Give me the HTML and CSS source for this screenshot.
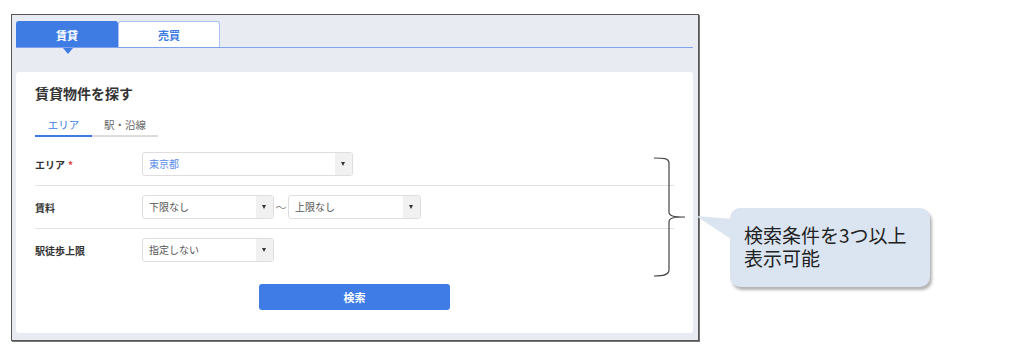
FILE: index.html
```html
<!DOCTYPE html>
<html lang="ja">
<head>
  <meta charset="UTF-8" />
  <title>賃貸物件を探す</title>
  <link rel="stylesheet" href="styles.css">
</head>
<body>
  <div class="shot">
    <div class="tabs">
      <div class="tab active">賃貸</div>
      <div class="tab">売買</div>
    </div>

    <div class="card">
      <h2>賃貸物件を探す</h2>

      <div class="subtabs">
        <div class="subtab active">エリア</div>
        <div class="subtab">駅・沿線</div>
      </div>

      <div class="row">
        <div class="label">エリア<span class="req">*</span></div>
        <div class="select wide">
          <span class="value blue">東京都</span>
          <span class="arrow"></span>
        </div>
      </div>

      <div class="row">
        <div class="label">賃料</div>
        <div class="select">
          <span class="value">下限なし</span>
          <span class="arrow"></span>
        </div>
        <span class="tilde">〜</span>
        <div class="select">
          <span class="value">上限なし</span>
          <span class="arrow"></span>
        </div>
      </div>

      <div class="row last">
        <div class="label">駅徒歩上限</div>
        <div class="select">
          <span class="value">指定しない</span>
          <span class="arrow"></span>
        </div>
      </div>

      <div class="actions">
        <button class="search">検索</button>
      </div>
    </div>
  </div>

  <!-- 注釈 -->
  <svg class="bracket" width="40" height="124" viewBox="0 0 40 124">
    <path d="M1 1 C10 1 16 1 16 6 L16 55 C16 59 20 60 32 60 C20 60 16 61 16 65 L16 113 C16 118 10 119 1 119" fill="none" stroke="#444" stroke-width="1.2" />
  </svg>

  <div class="callout">
    <svg class="tail" width="40" height="30" viewBox="0 0 40 30">
      <path d="M0 1 L38 4 L38 26 Z" fill="#dbe5f1" />
    </svg>
    <p>検索条件を3つ以上</p>
    <p>表示可能</p>
  </div>
</body>
</html>
```

FILE: styles.css
```css
body {
  margin: 0;
  background: #fff;
  font-family: "Noto Sans CJK JP", "Noto Sans", sans-serif;
  color: #333;
  position: relative;
  height: 351px;
}
.shot {
  margin: 14px 0 0 11px;
  width: 688px;
  height: 327px;
  box-sizing: border-box;
  border: 1px solid #555;
  box-shadow: 1px 1px 0 #777;
  background: #e9ebf2;
  padding: 6px 5px 0 4px;
}
.tabs {
  display: flex;
  height: 26px;
  border-bottom: 1px solid #7ea3ec;
}
.tab {
  width: 102px;
  height: 26px;
  box-sizing: border-box;
  display: flex;
  align-items: center;
  justify-content: center;
  font-size: 11px;
  font-weight: bold;
  color: #3e7be3;
  background: #fff;
  border: 1px solid #a9c3f1;
  border-bottom: none;
  border-radius: 3px 3px 0 0;
}
.tab.active {
  background: #3e7ce4;
  color: #fff;
  border-color: #3e7ce4;
  position: relative;
}
.tab.active::after {
  content: "";
  position: absolute;
  left: 46px;
  bottom: -7px;
  border-left: 5px solid transparent;
  border-right: 5px solid transparent;
  border-top: 6px solid #3e7ce4;
}
.card {
  margin-top: 24px;
  height: 261px;
  box-sizing: border-box;
  background: #fff;
  border-radius: 3px;
  padding: 11px 19px 0;
}
h2 {
  margin: 0;
  font-size: 14px;
  line-height: 20px;
  font-weight: bold;
  color: #333;
}
.subtabs {
  display: flex;
  margin-top: 12px;
}
.subtab {
  height: 22px;
  line-height: 20px;
  font-size: 10.5px;
  color: #666;
  text-align: center;
  border-bottom: 2px solid #ddd;
  width: 66px;
  box-sizing: border-box;
}
.subtab.active {
  width: 57px;
  color: #3b7be2;
  border-bottom-color: #3b7be2;
}
.row {
  display: flex;
  align-items: center;
  padding: 9px 0;
  border-bottom: 1px solid #e3e3e3;
}
.subtabs + .row {
  margin-top: 6px;
}
.row.last {
  border-bottom: none;
}
.label {
  width: 107px;
  font-size: 10px;
  font-weight: bold;
  color: #333;
}
.req {
  color: #e0454a;
  margin-left: 3px;
}
.select {
  width: 132px;
  height: 24px;
  box-sizing: border-box;
  border: 1px solid #dedede;
  border-radius: 3px;
  display: flex;
  overflow: hidden;
}
.select.wide {
  width: 211px;
}
.tilde + .select {
  width: 133px;
}
.value {
  flex: 1;
  padding-left: 6px;
  font-size: 10px;
  line-height: 22px;
  color: #555;
}
.value.blue {
  color: #5b8de9;
}
.arrow {
  width: 17px;
  background: #f1f1f1;
  position: relative;
}
.arrow::after {
  content: "";
  position: absolute;
  left: 6px;
  top: 9px;
  border-left: 2.5px solid transparent;
  border-right: 2.5px solid transparent;
  border-top: 4px solid #333;
}
.tilde {
  width: 14px;
  text-align: center;
  font-size: 11px;
  color: #888;
}
.actions {
  display: flex;
  justify-content: center;
  margin-top: 13px;
}
.search {
  width: 191px;
  height: 26px;
  border: none;
  border-radius: 3px;
  background: #3f7ce6;
  color: #fff;
  font-family: inherit;
  font-size: 11px;
  font-weight: bold;
}
.bracket {
  position: absolute;
  left: 653px;
  top: 157px;
}
.callout {
  position: absolute;
  left: 730px;
  top: 208px;
  width: 200px;
  height: 79px;
  box-sizing: border-box;
  background: #dbe5f1;
  border-radius: 10px;
  box-shadow: 2px 3px 3px rgba(0, 0, 0, 0.3);
  padding: 15px 0 0 14px;
}
.tail {
  position: absolute;
  left: -34px;
  top: 7px;
}
.callout p {
  margin: 0;
  font-size: 19px;
  line-height: 23px;
  height: 23px;
  color: #222;
  white-space: nowrap;
}
```
